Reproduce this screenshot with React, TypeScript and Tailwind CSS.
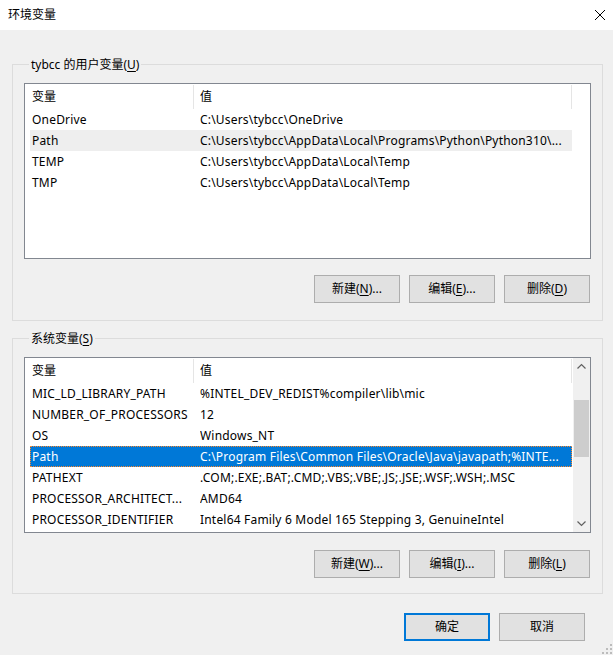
import React from "react";

type Row = [string, string];

const userRows: Row[] = [
  ["OneDrive", "C:\\Users\\tybcc\\OneDrive"],
  ["Path", "C:\\Users\\tybcc\\AppData\\Local\\Programs\\Python\\Python310\\..."],
  ["TEMP", "C:\\Users\\tybcc\\AppData\\Local\\Temp"],
  ["TMP", "C:\\Users\\tybcc\\AppData\\Local\\Temp"],
];

const sysRows: Row[] = [
  ["MIC_LD_LIBRARY_PATH", "%INTEL_DEV_REDIST%compiler\\lib\\mic"],
  ["NUMBER_OF_PROCESSORS", "12"],
  ["OS", "Windows_NT"],
  ["Path", "C:\\Program Files\\Common Files\\Oracle\\Java\\javapath;%INTE..."],
  ["PATHEXT", ".COM;.EXE;.BAT;.CMD;.VBS;.VBE;.JS;.JSE;.WSF;.WSH;.MSC"],
  ["PROCESSOR_ARCHITECT...", "AMD64"],
  ["PROCESSOR_IDENTIFIER", "Intel64 Family 6 Model 165 Stepping 3, GenuineIntel"],
];

function Chevron({ up }: { up: boolean }) {
  return (
    <svg width="17" height="17" viewBox="0 0 17 17">
      <path
        d={up ? "M4.5 10.5 L8.5 6.5 L12.5 10.5" : "M4.5 6.5 L8.5 10.5 L12.5 6.5"}
        fill="none"
        stroke="#606060"
        strokeWidth="1.2"
      />
    </svg>
  );
}

function ListView({
  rows,
  selected,
  soft,
  scrollbar,
}: {
  rows: Row[];
  selected?: number;
  soft?: number;
  scrollbar?: boolean;
}) {
  return (
    <div className="h-[176px] border border-[#828790] bg-white flex overflow-hidden">
      <div className="flex-1 min-w-0 flex flex-col">
        <div className="h-[25px] flex shrink-0">
          <div className="w-[169px] pl-[7px] flex items-center border-r border-[#e5e5e5] mt-[1px]">变量</div>
          <div className="w-[378px] pl-[6px] flex items-center border-r border-[#e5e5e5] mt-[1px]">值</div>
        </div>
        <div className="flex flex-col pl-[5px] tracking-[0.19px]">
          {rows.map((r, i) => {
            const isSel = i === selected;
            const isSoft = i === soft;
            return (
              <div
                key={i}
                className={
                  "h-[21px] w-[542px] flex items-center whitespace-nowrap overflow-hidden " +
                  (isSel
                    ? "bg-[#0078d7] text-white border border-dotted border-[#ff8728]"
                    : isSoft
                    ? "bg-[#eeeeee]"
                    : "")
                }
              >
                <div className={"w-[170px] shrink-0 overflow-hidden " + (isSel ? "pl-[1px]" : "pl-[2px]")}>{r[0]}</div>
                <div className={"flex-1 min-w-0 overflow-hidden " + (isSel ? "-ml-[1px]" : "")}>{r[1]}</div>
              </div>
            );
          })}
        </div>
      </div>
      {scrollbar && (
        <div className="w-[17px] shrink-0 bg-[#f0f0f0] flex flex-col">
          <div className="h-[17px] flex items-center justify-center">
            <Chevron up />
          </div>
          <div className="flex-1 flex flex-col items-center pt-[25px]">
            <div className="w-[15px] h-[57px] bg-[#cdcdcd]" />
          </div>
          <div className="h-[17px] flex items-center justify-center">
            <Chevron up={false} />
          </div>
        </div>
      )}
    </div>
  );
}

function Btn({ children, primary }: { children: React.ReactNode; primary?: boolean }) {
  return (
    <div
      className={
        "w-[86px] h-[28px] bg-[#e1e1e1] flex items-center justify-center " +
        (primary ? "border-2 border-[#0078d7]" : "border border-[#adadad]")
      }
    >
      {children}
    </div>
  );
}

function U({ children }: { children: React.ReactNode }) {
  return <span className="underline underline-offset-[2px]">{children}</span>;
}

export default function App() {
  return (
    <div className="w-[613px] h-[655px] bg-[#f0f0f0] relative flex flex-col text-[12px] text-black font-['Noto_Sans','Noto_Sans_CJK_SC',sans-serif] leading-[16px]">
      <div className="h-[30px] bg-white flex items-center justify-between pl-[8px] pr-[8px] shrink-0">
        <span>环境变量</span>
        <svg width="10" height="10" viewBox="0 0 10 10">
          <path d="M0 0 L10 10 M10 0 L0 10" stroke="#000" strokeWidth="1" />
        </svg>
      </div>
      <div className="pl-[12px] pr-[10px] pt-[26px] flex flex-col">
        <fieldset className="border border-[#dcdcdc] px-[11px] pt-[10px] pb-[17px]">
          <legend className="ml-[5px] px-[2px] leading-[17px]">
            tybcc 的用户变量(<U>U</U>)
          </legend>
          <ListView rows={userRows} soft={1} />
          <div className="flex justify-end gap-[9px] mt-[16px] pr-[1px]">
            <Btn>
              新建(<U>N</U>)...
            </Btn>
            <Btn>
              编辑(<U>E</U>)...
            </Btn>
            <Btn>
              删除(<U>D</U>)
            </Btn>
          </div>
        </fieldset>
        <fieldset className="border border-[#dcdcdc] px-[11px] pt-[10px] pb-[15px] mt-[9px]">
          <legend className="ml-[5px] px-[2px] leading-[17px]">
            系统变量(<U>S</U>)
          </legend>
          <ListView rows={sysRows} selected={3} scrollbar />
          <div className="flex justify-end gap-[9px] mt-[17px] pr-[1px]">
            <Btn>
              新建(<U>W</U>)...
            </Btn>
            <Btn>
              编辑(<U>I</U>)...
            </Btn>
            <Btn>
              删除(<U>L</U>)
            </Btn>
          </div>
        </fieldset>
      </div>
      <div className="flex justify-end gap-[9px] pr-[28px] mt-[19px]">
        <Btn primary>确定</Btn>
        <Btn>取消</Btn>
      </div>
      <svg className="absolute right-[1px] bottom-[1px]" width="10" height="10" viewBox="0 0 10 10">
        <rect x="8" y="0" width="2" height="2" fill="#bcbcbc" />
        <rect x="4" y="4" width="2" height="2" fill="#bcbcbc" />
        <rect x="8" y="4" width="2" height="2" fill="#bcbcbc" />
        <rect x="0" y="8" width="2" height="2" fill="#bcbcbc" />
        <rect x="4" y="8" width="2" height="2" fill="#bcbcbc" />
        <rect x="8" y="8" width="2" height="2" fill="#bcbcbc" />
      </svg>
    </div>
  );
}
